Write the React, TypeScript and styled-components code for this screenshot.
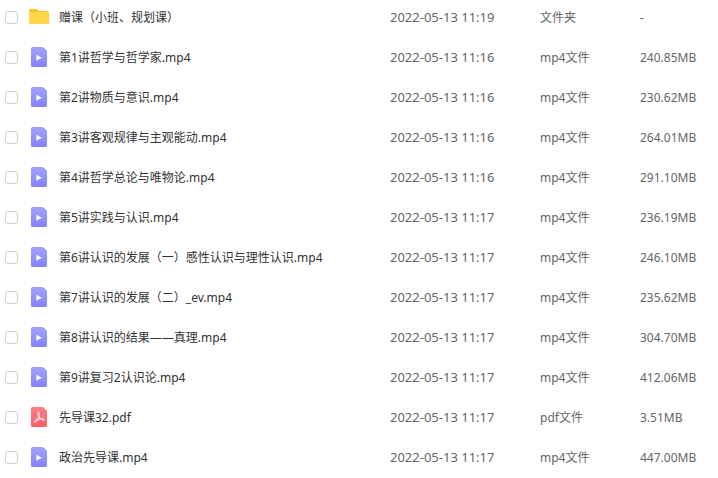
import React from "react";
import styled, { createGlobalStyle } from "styled-components";

type Kind = "folder" | "video" | "pdf";

interface FileEntry {
  name: string;
  kind: Kind;
  date: string;
  type: string;
  size: string;
}

const files: FileEntry[] = [
  { name: "赠课（小班、规划课）", kind: "folder", date: "2022-05-13 11:19", type: "文件夹", size: "-" },
  { name: "第1讲哲学与哲学家.mp4", kind: "video", date: "2022-05-13 11:16", type: "mp4文件", size: "240.85MB" },
  { name: "第2讲物质与意识.mp4", kind: "video", date: "2022-05-13 11:16", type: "mp4文件", size: "230.62MB" },
  { name: "第3讲客观规律与主观能动.mp4", kind: "video", date: "2022-05-13 11:16", type: "mp4文件", size: "264.01MB" },
  { name: "第4讲哲学总论与唯物论.mp4", kind: "video", date: "2022-05-13 11:16", type: "mp4文件", size: "291.10MB" },
  { name: "第5讲实践与认识.mp4", kind: "video", date: "2022-05-13 11:17", type: "mp4文件", size: "236.19MB" },
  { name: "第6讲认识的发展（一）感性认识与理性认识.mp4", kind: "video", date: "2022-05-13 11:17", type: "mp4文件", size: "246.10MB" },
  { name: "第7讲认识的发展（二）_ev.mp4", kind: "video", date: "2022-05-13 11:17", type: "mp4文件", size: "235.62MB" },
  { name: "第8讲认识的结果——真理.mp4", kind: "video", date: "2022-05-13 11:17", type: "mp4文件", size: "304.70MB" },
  { name: "第9讲复习2认识论.mp4", kind: "video", date: "2022-05-13 11:17", type: "mp4文件", size: "412.06MB" },
  { name: "先导课32.pdf", kind: "pdf", date: "2022-05-13 11:17", type: "pdf文件", size: "3.51MB" },
  { name: "政治先导课.mp4", kind: "video", date: "2022-05-13 11:17", type: "mp4文件", size: "447.00MB" },
];

const GlobalStyle = createGlobalStyle`
  * { box-sizing: border-box; }
  body {
    margin: 0;
    background: #fff;
    font-family: "Noto Sans", "Noto Sans CJK SC", sans-serif;
    font-size: 12px;
    line-height: 18px;
  }
`;

const Viewport = styled.main`
  max-height: 100vh;
  overflow: hidden;
`;

const FileTable = styled.table`
  width: 100%;
  table-layout: fixed;
  border-collapse: collapse;
`;

const Column = styled.col<{ $width?: number }>`
  width: ${({ $width }) => ($width ? `${$width}px` : "auto")};
`;

const Row = styled.tr`
  height: 40px;
`;

const Cell = styled.td`
  padding: 0 0 5px;
  color: #666;
  white-space: nowrap;
  vertical-align: middle;
`;

const DateCell = styled(Cell)`
  padding-bottom: 6px;
  font-size: 13px;
`;

const CheckCell = styled(Cell)`
  padding-left: 5px;
`;

const IconCell = styled(Cell)`
  padding-bottom: 6px;
`;

const NameCell = styled(Cell)`
  color: #333;
  overflow: hidden;
  text-overflow: ellipsis;
`;

const Checkbox = styled.input`
  appearance: none;
  display: block;
  width: 13px;
  height: 13px;
  margin: 0;
  border: 1px solid #d0d0d0;
  border-radius: 3px;
  background: #fff;

  &:checked {
    border-color: #8587ff;
    background: #8587ff;
  }
`;

const Icon = styled.svg`
  display: block;
  width: 22px;
  height: 20px;
`;

function FileIcon({ kind }: { kind: Kind }) {
  if (kind === "folder") {
    return (
      <Icon viewBox="0 0 22 20" aria-hidden="true">
        <path d="M1 4Q1 2 3 2h6l2 2h8.500Q21 4 21 5.500V8H1z" fill="#fec62d" />
        <path d="M1 5h18.800Q21 5 21 6.400v9Q21 17 19.400 17H2.600Q1 17 1 15.400z" fill="#ffd648" />
      </Icon>
    );
  }
  const pdf = kind === "pdf";
  return (
    <Icon viewBox="0 0 22 20" aria-hidden="true">
      <defs>
        <linearGradient id={`sheet-${kind}`} x1="0" y1="0" x2="0" y2="1">
          <stop offset="0" stopColor={pdf ? "#ff8087" : "#a2a4ff"} />
          <stop offset="1" stopColor={pdf ? "#ff5c67" : "#8284ff"} />
        </linearGradient>
      </defs>
      <path d="M4.500 0h10.500l4 4v14.500q0 1.500-1.500 1.500h-13Q3 20 3 18.500v-17Q3 0 4.500 0z" fill={`url(#sheet-${kind})`} />
      {pdf ? (
        <path
          d="M10.300 5c1.700-.2 1.200 2.300.8 4-.5 2.100-1.700 4.500-3.100 5.900-1.300 1-2.300-.3-1.200-1.200 2-1.500 5.800-2.200 8.500-1.700 1.600.4 1.200 1.600-.1 1.300-2-.6-4.500-3.200-5.100-5.600-.3-1.200-.5-2.500.2-2.700z"
          fill="none"
          stroke="#fff"
          strokeWidth="1"
          strokeLinejoin="round"
        />
      ) : (
        <path d="M8.500 8v5.500l5-2.750z" fill="#fff" stroke="#fff" strokeWidth=".4" strokeLinejoin="round" />
      )}
    </Icon>
  );
}

function FileRow({ file }: { file: FileEntry }) {
  return (
    <Row>
      <CheckCell>
        <Checkbox type="checkbox" aria-label={file.name} />
      </CheckCell>
      <IconCell>
        <FileIcon kind={file.kind} />
      </IconCell>
      <NameCell>{file.name}</NameCell>
      <DateCell>{file.date}</DateCell>
      <Cell>{file.type}</Cell>
      <Cell>{file.size}</Cell>
    </Row>
  );
}

export default function App() {
  return (
    <>
      <GlobalStyle />
      <Viewport lang="zh-CN">
        <FileTable>
          <colgroup>
            <Column $width={28} />
            <Column $width={31} />
            <Column />
            <Column $width={150} />
            <Column $width={100} />
            <Column $width={78} />
          </colgroup>
          <tbody>
            {files.map((file) => (
              <FileRow key={file.name} file={file} />
            ))}
          </tbody>
        </FileTable>
      </Viewport>
    </>
  );
}
